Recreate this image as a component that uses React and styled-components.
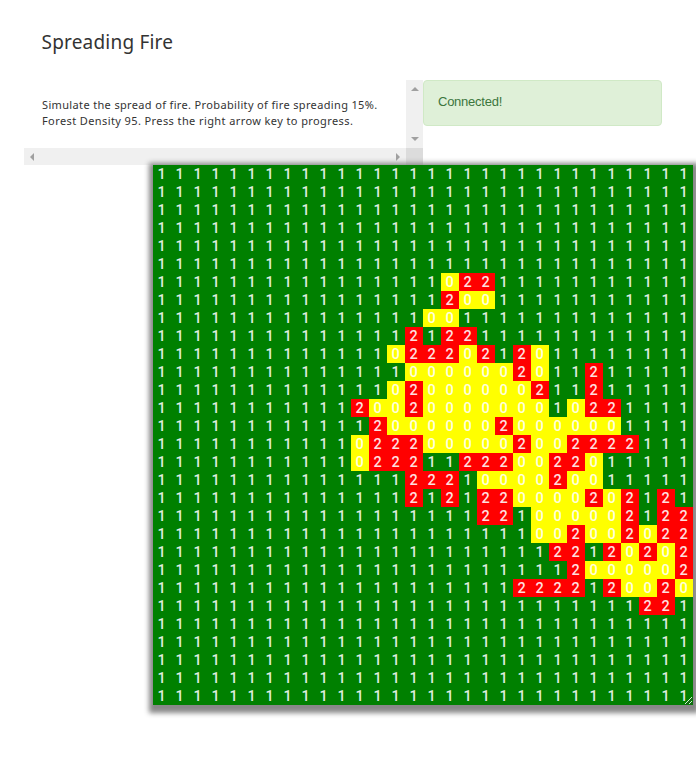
import React from "react";
import styled, { createGlobalStyle } from "styled-components";

const GlobalStyle = createGlobalStyle`
  * { box-sizing: border-box; }
  html, body { margin: 0; background: #fff; overflow: hidden; }
`;

const Page = styled.main`
  width: 696px;
  height: 765px;
  padding: 24px 0 0 24px;
  overflow: hidden;
`;

const Title = styled.h1`
  margin: 0;
  padding-left: 17.5px;
  height: 56px;
  font: 400 19px/36px "Noto Sans", sans-serif;
  letter-spacing: 0.2px;
  color: #333;
`;

const TopRow = styled.div`
  display: flex;
  align-items: flex-start;
  height: 85px;
`;

const ScrollPanel = styled.section`
  display: grid;
  grid-template: 68px 17px / 382px 17px;
`;

const Description = styled.p`
  margin: 0;
  padding: 17px 0 0 18px;
  font: 400 11px/16px "Noto Sans", sans-serif;
  color: #333;
  white-space: nowrap;
`;

const Line = styled.span`
  display: block;
  letter-spacing: ${(p) => p.$spacing}px;
`;

const Track = styled.div`
  display: flex;
  flex-direction: ${(p) => (p.$vertical ? "column" : "row")};
  justify-content: space-between;
  align-items: center;
  padding: ${(p) => (p.$vertical ? "7px 0" : "0 6px")};
  background: #f0f0f0;
`;

const Corner = styled.div`
  background: #dcdcdc;
`;

const Arrow = styled.svg`
  display: block;
  fill: #a0a0a0;
`;

const Alert = styled.div`
  width: 239px;
  height: 46px;
  padding: 0 14px;
  border: 1px solid #d0e9c6;
  border-radius: 4px;
  background: #dff0d8;
  color: #3c763d;
  font: 400 13px/42px "Liberation Sans", Arial, sans-serif;
  letter-spacing: -0.25px;
`;

const Board = styled.div`
  position: relative;
  display: grid;
  grid-template-columns: repeat(30, 18px);
  grid-auto-rows: 18px;
  width: 540px;
  margin-left: 129px;
  box-shadow: 1px 3px 5px 5px #888;
`;

const FILL = { 0: "#ffff00", 1: "#008000", 2: "#ff0000" };

const Cell = styled.span`
  background: ${(p) => FILL[p.$state]};
  color: rgba(255, 255, 255, 0.88);
  font: 500 14.5px/20px Roboto, Arial, sans-serif;
  height: 18px;
  text-align: center;
  padding-right: 1px;
`;

const Grip = styled.svg`
  position: absolute;
  right: 0;
  bottom: 0;
`;

const SIZE = 30;

// Burning region per row: [first column, states]; all other cells are trees.
const FIRE = {
  6: [16, "022"],
  7: [16, "200"],
  8: [15, "00"],
  9: [14, "2122"],
  10: [13, "022202120"],
  11: [14, "00000020112"],
  12: [13, "020000002112"],
  13: [11, "200200000001022"],
  14: [12, "20000002000000"],
  15: [11, "0222000002002222"],
  16: [11, "02221122200220"],
  17: [14, "22210000200"],
  18: [14, "2121220000202121"],
  19: [18, "221000002122"],
  20: [21, "002002022"],
  21: [22, "22120202"],
  22: [23, "2000002"],
  23: [20, "2222120020"],
  24: [27, "22"],
};

const rows = Array.from({ length: SIZE }, (_, y) => {
  const [start, states] = FIRE[y] || [0, ""];
  return ("1".repeat(start) + states).padEnd(SIZE, "1");
});

export default function App() {
  return (
    <Page>
      <GlobalStyle />
      <Title>Spreading Fire</Title>
      <TopRow>
        <ScrollPanel>
          <Description>
            <Line $spacing={0.35}>Simulate the spread of fire. Probability of fire spreading 15%.</Line>
            <Line $spacing={0.4}>Forest Density 95. Press the right arrow key to progress.</Line>
          </Description>
          <Track $vertical>
            <Arrow width="8" height="4"><path d="M0 4L4 0L8 4Z" /></Arrow>
            <Arrow width="8" height="4"><path d="M0 0L4 4L8 0Z" /></Arrow>
          </Track>
          <Track>
            <Arrow width="4" height="8"><path d="M4 0L0 4L4 8Z" /></Arrow>
            <Arrow width="4" height="8"><path d="M0 0L4 4L0 8Z" /></Arrow>
          </Track>
          <Corner />
        </ScrollPanel>
        <Alert>Connected!</Alert>
      </TopRow>
      <Board>
        {rows.map((row, y) =>
          [...row].map((state, x) => (
            <Cell key={`${y}-${x}`} $state={state}>{state}</Cell>
          ))
        )}
        <Grip width="9" height="9" fill="none">
          <path d="M1 8L8 1M5 8L8 5" stroke="#d9ead9" />
          <path d="M2 9L9 2M6 9L9 6" stroke="#245024" />
        </Grip>
      </Board>
    </Page>
  );
}
